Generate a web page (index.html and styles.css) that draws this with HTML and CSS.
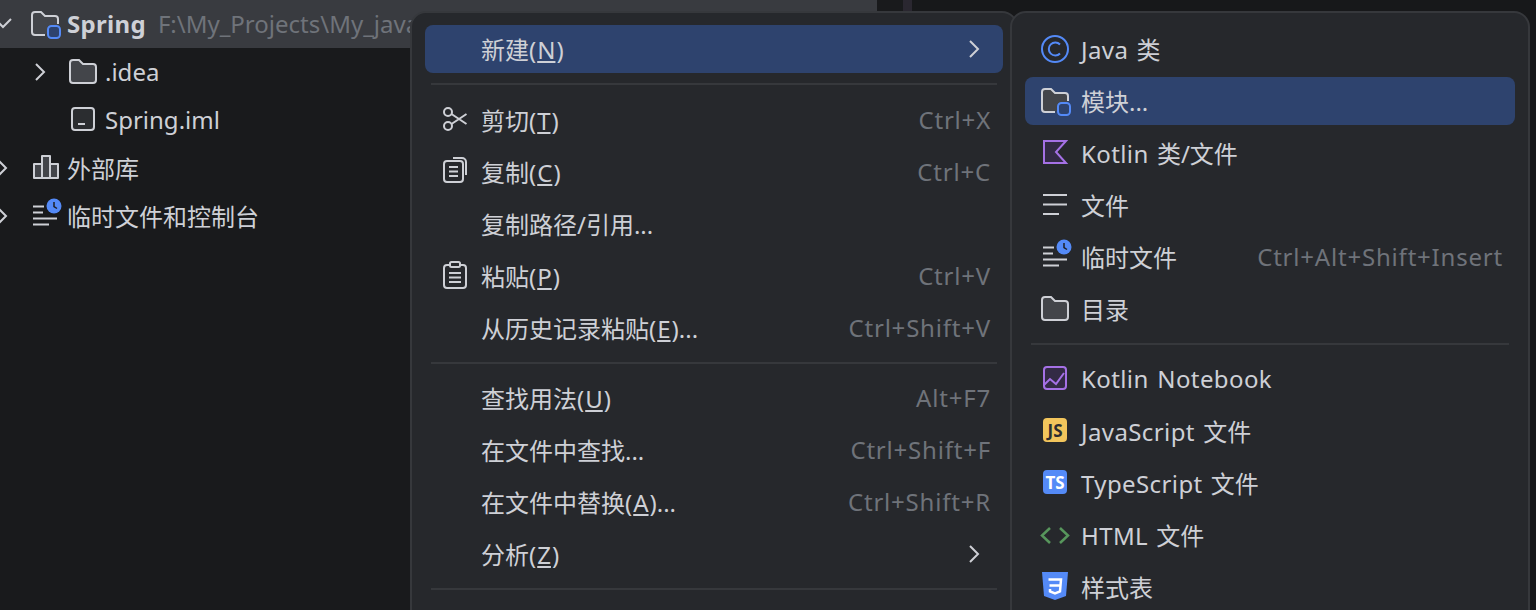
FILE: index.html
```html
<!DOCTYPE html>
<html lang="zh-CN">
<head>
    <meta charset="UTF-8">
    <title>新建模块</title>
    <link rel="stylesheet" href="styles.css">
</head>
<body>
    <svg class="defs" width="0" height="0">
        <symbol id="i-folder" viewBox="0 0 32 28" overflow="visible">
            <path d="M3 5a3 3 0 0 1 3-3h6l4 4h10a3 3 0 0 1 3 3v13a3 3 0 0 1-3 3H6a3 3 0 0 1-3-3z" fill="#43454a" stroke="#ced0d6" stroke-width="2"/>
        </symbol>
        <symbol id="i-module" viewBox="0 0 32 28" overflow="visible">
            <path d="M16 25H6a3 3 0 0 1-3-3V5a3 3 0 0 1 3-3h6l4 4h10a3 3 0 0 1 3 3v5" fill="#43454a" stroke="#ced0d6" stroke-width="2"/>
            <rect x="19" y="16" width="12" height="12" rx="3.500" fill="#2e436e" stroke="#548af7" stroke-width="2"/>
        </symbol>
        <symbol id="i-scratch" viewBox="0 0 32 28" overflow="visible">
            <path d="M4 4.500h11M4 10.500h10M4 16.500h24M4 22.500h16" stroke="#ced0d6" stroke-width="2"/>
            <circle cx="25" cy="4" r="7.500" fill="#548af7"/>
            <path d="M25 0v4.500l3 2" fill="none" stroke="#1e1f22" stroke-width="1.500"/>
        </symbol>
        <symbol id="i-chevron" viewBox="0 0 14 28" overflow="visible">
            <path d="M2 6l8 8-8 8" fill="none" stroke="#ced0d6" stroke-width="2"/>
        </symbol>
    </svg>

    <div class="workspace">
        <div class="project-panel">
            <div class="tree">
                <div class="tree-row tree-row-root">
                    <svg class="chevron" viewBox="0 0 14 28"><path d="M-1 9l8 8 8-8" fill="none" stroke="#ced0d6" stroke-width="2"/></svg>
                    <svg class="icon"><use href="#i-module"/></svg>
                    <span class="tree-name-bold">Spring</span>
                    <span class="tree-path">F:\My_Projects\My_java</span>
                </div>
                <div class="tree-row tree-row-child">
                    <svg class="chevron"><use href="#i-chevron"/></svg>
                    <svg class="icon"><use href="#i-folder"/></svg>
                    <span>.idea</span>
                </div>
                <div class="tree-row tree-row-child">
                    <span class="chevron"></span>
                    <svg class="icon" viewBox="0 0 32 28">
                        <rect x="5" y="2" width="22" height="22" rx="3" fill="#2b2d30" stroke="#ced0d6" stroke-width="2"/>
                        <path d="M11 18h7" stroke="#ced0d6" stroke-width="2"/>
                    </svg>
                    <span>Spring.iml</span>
                </div>
                <div class="tree-row">
                    <svg class="chevron"><use href="#i-chevron"/></svg>
                    <svg class="icon" viewBox="0 0 32 28">
                        <path d="M5 10h8v14H5zM13 2h8v22h-8zM21 10h8v14h-8z" fill="#43454a" stroke="#ced0d6" stroke-width="2" stroke-linejoin="round"/>
                    </svg>
                    <span>外部库</span>
                </div>
                <div class="tree-row">
                    <svg class="chevron"><use href="#i-chevron"/></svg>
                    <svg class="icon"><use href="#i-scratch"/></svg>
                    <span>临时文件和控制台</span>
                </div>
            </div>
        </div>
        <div class="panel-divider"></div>
        <div class="editor"></div>
    </div>

    <div class="menu menu-main">
        <div class="menu-item active">
            <span class="icon"></span>
            <span>新建(<u>N</u>)</span>
            <svg class="menu-arrow"><use href="#i-chevron"/></svg>
        </div>
        <div class="menu-sep menu-sep-wide"></div>
        <div class="menu-item">
            <svg class="icon" viewBox="0 0 32 28">
                <g fill="none" stroke="#ced0d6" stroke-width="2">
                    <circle cx="9" cy="6" r="4"/>
                    <circle cx="9" cy="20" r="4"/>
                    <path d="M12.500 8l15 10M12.500 18l15-10"/>
                </g>
            </svg>
            <span>剪切(<u>T</u>)</span>
            <span class="shortcut">Ctrl+X</span>
        </div>
        <div class="menu-item">
            <svg class="icon" viewBox="0 0 32 28">
                <g fill="none" stroke="#ced0d6" stroke-width="2">
                    <rect x="5" y="3" width="19" height="21" rx="3"/>
                    <path d="M14 0h9a4 4 0 0 1 4 4v13M10 9h9M10 13.500h9M10 18h9"/>
                </g>
            </svg>
            <span>复制(<u>C</u>)</span>
            <span class="shortcut">Ctrl+C</span>
        </div>
        <div class="menu-item">
            <span class="icon"></span>
            <span>复制路径/引用...</span>
        </div>
        <div class="menu-item">
            <svg class="icon" viewBox="0 0 32 28">
                <g fill="none" stroke="#ced0d6" stroke-width="2">
                    <path d="M11 3H8a3 3 0 0 0-3 3v17a3 3 0 0 0 3 3h16a3 3 0 0 0 3-3V6a3 3 0 0 0-3-3h-3"/>
                    <rect x="11" y="0" width="10" height="5" rx="1.500"/>
                    <path d="M10 11h12M10 15.500h12M10 20h12"/>
                </g>
            </svg>
            <span>粘贴(<u>P</u>)</span>
            <span class="shortcut">Ctrl+V</span>
        </div>
        <div class="menu-item">
            <span class="icon"></span>
            <span>从历史记录粘贴(<u>E</u>)...</span>
            <span class="shortcut">Ctrl+Shift+V</span>
        </div>
        <div class="menu-sep"></div>
        <div class="menu-item">
            <span class="icon"></span>
            <span>查找用法(<u>U</u>)</span>
            <span class="shortcut">Alt+F7</span>
        </div>
        <div class="menu-item">
            <span class="icon"></span>
            <span>在文件中查找...</span>
            <span class="shortcut">Ctrl+Shift+F</span>
        </div>
        <div class="menu-item">
            <span class="icon"></span>
            <span>在文件中替换(<u>A</u>)...</span>
            <span class="shortcut">Ctrl+Shift+R</span>
        </div>
        <div class="menu-item">
            <span class="icon"></span>
            <span>分析(<u>Z</u>)</span>
            <svg class="menu-arrow"><use href="#i-chevron"/></svg>
        </div>
        <div class="menu-sep"></div>
    </div>

    <div class="menu menu-sub">
        <div class="menu-item">
            <svg class="icon" viewBox="0 0 32 28">
                <g fill="none" stroke="#548af7" stroke-width="2">
                    <circle cx="16" cy="14" r="13"/>
                    <path d="M21 9.500a6.500 6.500 0 1 0 0 9"/>
                </g>
            </svg>
            <span><span class="latin">Java</span> 类</span>
        </div>
        <div class="menu-item active">
            <svg class="icon"><use href="#i-module"/></svg>
            <span>模块...</span>
        </div>
        <div class="menu-item">
            <svg class="icon" viewBox="0 0 32 28">
                <path d="M5 2h22L17 13l10 11H5z" fill="#332a45" stroke="#a571e6" stroke-width="2"/>
            </svg>
            <span><span class="latin">Kotlin</span> 类/文件</span>
        </div>
        <div class="menu-item">
            <svg class="icon" viewBox="0 0 32 28">
                <path d="M4 4h24M4 13.500h24M4 23h16" stroke="#ced0d6" stroke-width="2"/>
            </svg>
            <span>文件</span>
        </div>
        <div class="menu-item">
            <svg class="icon"><use href="#i-scratch"/></svg>
            <span>临时文件</span>
            <span class="shortcut">Ctrl+Alt+Shift+Insert</span>
        </div>
        <div class="menu-item">
            <svg class="icon"><use href="#i-folder"/></svg>
            <span>目录</span>
        </div>
        <div class="menu-sep"></div>
        <div class="menu-item">
            <svg class="icon" viewBox="0 0 32 28">
                <rect x="5" y="2" width="22" height="22" rx="3" fill="#332a45" stroke="#a571e6" stroke-width="2"/>
                <path d="M5 20l6-6 6 5 8-11" fill="none" stroke="#a571e6" stroke-width="2"/>
            </svg>
            <span class="latin">Kotlin Notebook</span>
        </div>
        <div class="menu-item">
            <svg class="icon" viewBox="0 0 32 28">
                <rect x="4" y="1" width="24" height="24" rx="4" fill="#f2c55c"/>
                <text x="16" y="19.500" class="icon-text" fill="#2b2d30">JS</text>
            </svg>
            <span><span class="latin">JavaScript</span> 文件</span>
        </div>
        <div class="menu-item">
            <svg class="icon" viewBox="0 0 32 28">
                <rect x="4" y="1" width="24" height="24" rx="4" fill="#548af7"/>
                <text x="16" y="19.500" class="icon-text" fill="#ffffff">TS</text>
            </svg>
            <span><span class="latin">TypeScript</span> 文件</span>
        </div>
        <div class="menu-item">
            <svg class="icon" viewBox="0 0 32 28">
                <path d="M11 7l-8 7.500 8 7.500M21 7l8 7.500-8 7.500" fill="none" stroke="#57965c" stroke-width="2.500"/>
            </svg>
            <span><span class="latin">HTML</span> 文件</span>
        </div>
        <div class="menu-item">
            <svg class="icon" viewBox="0 0 32 28">
                <path d="M3-1h26l-2 24-11 4-11-4z" fill="#548af7"/>
                <path d="M9.500 6.500H22l-1 12-5 2-5-2V16M10.500 12.500H21.500" fill="none" stroke="#ffffff" stroke-width="2.500"/>
            </svg>
            <span>样式表</span>
        </div>
    </div>
</body>
</html>
```

FILE: styles.css
```css
html, body {
    height: 100%;
}
body {
    margin: 0;
    overflow: hidden;
    background-color: #191a1c;
    color: #ced0d6;
    font-family: "Noto Sans", "Noto Sans CJK SC", sans-serif;
    font-size: 24px;
}
u {
    padding: 0 1px;
}
.defs {
    position: absolute;
}
.workspace {
    display: flex;
    height: 100%;
}
.project-panel {
    width: 877px;
    margin-right: 26px;
}
.panel-divider {
    width: 9px;
    background-color: #2a2730;
}
.editor {
    flex-grow: 1;
    background-color: #17181a;
}
.tree {
    margin-left: -4px;
}
.tree-row {
    display: flex;
    align-items: center;
    gap: 6px;
    height: 48px;
    white-space: nowrap;
    overflow: hidden;
}
.tree-row > span,
.menu-item > span {
    margin-bottom: 2px;
}
.tree-row-root {
    background-color: #393b40;
}
.tree-row-child {
    padding-left: 38px;
}
.tree-name-bold {
    font-weight: 700;
    letter-spacing: 0.3px;
}
.tree-path {
    margin-left: 6px;
    color: #6f737a;
}
.chevron {
    flex: none;
    width: 14px;
    height: 28px;
    margin-right: 13px;
    overflow: visible;
}
.icon {
    flex: none;
    width: 32px;
    height: 28px;
    overflow: visible;
}
.icon-text {
    font-family: "Noto Sans", sans-serif;
    font-size: 17px;
    font-weight: 700;
    text-anchor: middle;
}
.menu {
    position: absolute;
    top: 11px;
    display: flex;
    flex-direction: column;
    box-sizing: border-box;
    height: 640px;
    padding: 12px 13px;
    background-color: #26282c;
    border: 2px solid #36383c;
    border-radius: 16px;
}
.menu-main {
    left: 410px;
    width: 608px;
}
.menu-sub {
    left: 1010px;
    width: 520px;
    word-spacing: 2px;
}
.menu-item {
    display: flex;
    flex: none;
    align-items: center;
    gap: 10px;
    height: 48px;
    margin: 2px 0;
    padding: 0 13px 0 14px;
    border-radius: 8px;
    white-space: nowrap;
}
.menu .menu-item:first-child {
    margin-top: 0;
}
.menu-item.active {
    background-color: #2e436e;
}
.latin {
    letter-spacing: 0.4px;
}
.shortcut {
    margin-left: auto;
    margin-right: -1px;
    color: #6f737a;
    letter-spacing: 0.8px;
}
.menu-arrow {
    width: 14px;
    height: 28px;
    margin-left: auto;
    margin-right: 8px;
    overflow: visible;
}
.menu-sep {
    flex: none;
    height: 2px;
    margin: 8px 6px;
    background-color: #36383c;
}
.menu-sep-wide {
    margin-bottom: 9px;
}
```
